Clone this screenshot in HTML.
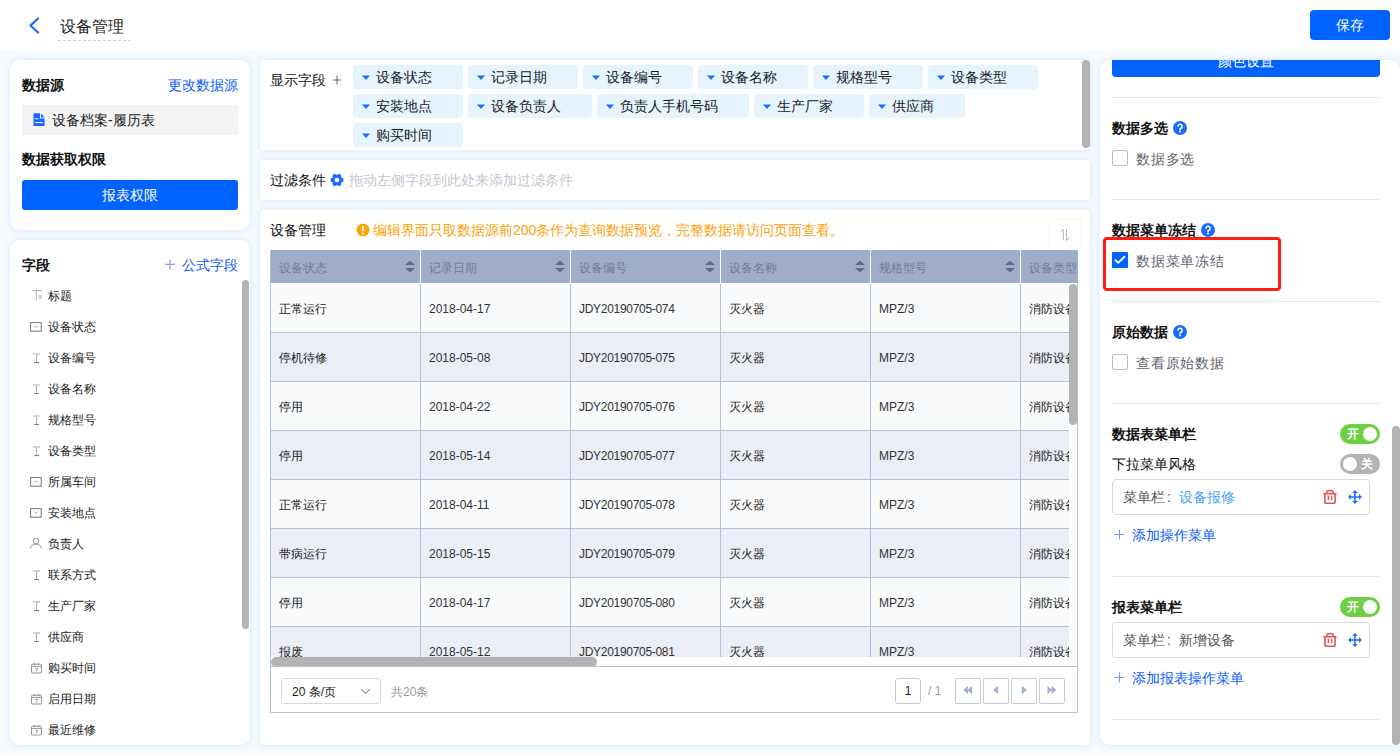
<!DOCTYPE html>
<html><head><meta charset="utf-8">
<style>
*{box-sizing:border-box;margin:0;padding:0}
html,body{width:1400px;height:755px;overflow:hidden}
body{font-family:"Liberation Sans",sans-serif;background:#f7fafe;position:relative;color:#333;font-size:14px}
.abs{position:absolute}
.hdr{left:0;top:0;width:1400px;height:50px;background:#fff}
.panel{position:absolute;background:#fff;box-shadow:0 0 6px rgba(202,231,255,.9)}
.t{position:absolute;white-space:nowrap;line-height:1}
.b{font-weight:bold;color:#111}
.blue{color:#0a66ff}
</style></head><body>
<!-- header -->
<div class="abs hdr">
  <svg class="abs" style="left:28px;top:17px" width="12" height="17" viewBox="0 0 12 17"><path d="M10 1.5 L2.5 8.5 L10 15.5" fill="none" stroke="#1a66ff" stroke-width="2.2" stroke-linecap="round" stroke-linejoin="round"/></svg>
  <div class="t" style="left:60px;top:19px;font-size:16px;color:#222">设备管理</div>
  <div class="abs" style="left:58px;top:40px;width:72px;height:1px;background:repeating-linear-gradient(90deg,#d0d0d0 0 3px,transparent 3px 5px)"></div>
  <div class="abs" style="left:1310px;top:10px;width:80px;height:30px;background:#0062ff;border-radius:4px;color:#fff;font-size:14px;line-height:30px;text-align:center">保存</div>
</div>

<!-- left panel 1 -->
<div class="panel" style="left:10px;top:60px;width:240px;height:170px;border-radius:10px">
  <div class="t b" style="left:12px;top:18px;font-size:14px">数据源</div>
  <div class="t blue" style="right:12px;top:18px;font-size:14px;color:#0b5cff">更改数据源</div>
  <div class="abs" style="left:12px;top:45px;width:216px;height:30px;background:#f4f4f5;border-radius:2px">
    <svg class="abs" style="left:11px;top:8px" width="12" height="13" viewBox="0 0 12 13"><path d="M0.5 0.3H7V5.4H11.6V12.4a0.6 0.6 0 0 1-.6.6H1.1a0.6 0.6 0 0 1-.6-.6Z" fill="#1a64ff"/><path d="M8 0.6L11.6 4.4H8Z" fill="#1a64ff"/><rect x="2" y="5.3" width="3.5" height="1" fill="#fff"/><rect x="2" y="9.1" width="8" height="1" fill="#fff"/></svg>
    <div class="t" style="left:30px;top:8px;font-size:14px;color:#1a1a1a">设备档案-履历表</div>
  </div>
  <div class="t b" style="left:12px;top:92px;font-size:14px">数据获取权限</div>
  <div class="abs" style="left:12px;top:120px;width:216px;height:30px;background:#0062ff;border-radius:3px;color:#fff;font-size:14px;line-height:30px;text-align:center">报表权限</div>
</div>
<!-- left panel 2 -->
<div class="panel" style="left:10px;top:240px;width:240px;height:505px;border-radius:10px;overflow:hidden">
  <div class="t b" style="left:12px;top:18px;font-size:14px">字段</div>
  <svg class="abs" style="left:155px;top:19px" width="10" height="11" viewBox="0 0 10 11"><path d="M5 0.5v10M0 5.3h10" stroke="#7289ff" stroke-width="1"/></svg><div class="t" style="right:12px;top:18px;font-size:14px;color:#0b5cff">公式字段</div>
  <div class="abs" style="left:232px;top:40px;width:7px;height:349px;background:#b3b3b3;border-radius:3.5px"></div>
<div class="abs" style="left:21px;top:50px;width:14px;height:14px"><svg width="14" height="14" viewBox="0 0 14 14"><path d="M1.3 0.6h9.6" stroke="#aaa" stroke-width="1" fill="none"/><path d="M5.3 0.6v10" stroke="#c9a99a" stroke-width="1" fill="none"/><path d="M7.6 6h3.4M7.6 8h3.4" stroke="#999" stroke-width="0.9" fill="none"/></svg></div><div class="t" style="left:38px;top:50px;font-size:12px;color:#1a1a1a">标题</div>
<div class="abs" style="left:20px;top:82px;width:14px;height:14px"><svg width="14" height="14" viewBox="0 0 14 14"><rect x="0.6" y="0.6" width="10.6" height="8.6" fill="none" stroke="#777" stroke-width="1"/><path d="M4.2 3.6l1.8 1.8 1.8-1.8" fill="none" stroke="#99a" stroke-width="0.9"/></svg></div><div class="t" style="left:38px;top:81px;font-size:12px;color:#1a1a1a">设备状态</div>
<div class="abs" style="left:20px;top:113px;width:14px;height:14px"><svg width="14" height="14" viewBox="0 0 14 14"><path d="M3 1h7.2" stroke="#c4c4c4" stroke-width="1.4" fill="none"/><path d="M6.6 1.7v7.8" stroke="#a59a9a" stroke-width="0.9" fill="none"/><path d="M4.2 9.6h4.8" stroke="#777" stroke-width="1" fill="none"/></svg></div><div class="t" style="left:38px;top:112px;font-size:12px;color:#1a1a1a">设备编号</div>
<div class="abs" style="left:20px;top:144px;width:14px;height:14px"><svg width="14" height="14" viewBox="0 0 14 14"><path d="M3 1h7.2" stroke="#c4c4c4" stroke-width="1.4" fill="none"/><path d="M6.6 1.7v7.8" stroke="#a59a9a" stroke-width="0.9" fill="none"/><path d="M4.2 9.6h4.8" stroke="#777" stroke-width="1" fill="none"/></svg></div><div class="t" style="left:38px;top:143px;font-size:12px;color:#1a1a1a">设备名称</div>
<div class="abs" style="left:20px;top:175px;width:14px;height:14px"><svg width="14" height="14" viewBox="0 0 14 14"><path d="M3 1h7.2" stroke="#c4c4c4" stroke-width="1.4" fill="none"/><path d="M6.6 1.7v7.8" stroke="#a59a9a" stroke-width="0.9" fill="none"/><path d="M4.2 9.6h4.8" stroke="#777" stroke-width="1" fill="none"/></svg></div><div class="t" style="left:38px;top:174px;font-size:12px;color:#1a1a1a">规格型号</div>
<div class="abs" style="left:20px;top:206px;width:14px;height:14px"><svg width="14" height="14" viewBox="0 0 14 14"><path d="M3 1h7.2" stroke="#c4c4c4" stroke-width="1.4" fill="none"/><path d="M6.6 1.7v7.8" stroke="#a59a9a" stroke-width="0.9" fill="none"/><path d="M4.2 9.6h4.8" stroke="#777" stroke-width="1" fill="none"/></svg></div><div class="t" style="left:38px;top:205px;font-size:12px;color:#1a1a1a">设备类型</div>
<div class="abs" style="left:20px;top:237px;width:14px;height:14px"><svg width="14" height="14" viewBox="0 0 14 14"><rect x="0.6" y="0.6" width="10.6" height="8.6" fill="none" stroke="#777" stroke-width="1"/><path d="M4.2 3.6l1.8 1.8 1.8-1.8" fill="none" stroke="#99a" stroke-width="0.9"/></svg></div><div class="t" style="left:38px;top:236px;font-size:12px;color:#1a1a1a">所属车间</div>
<div class="abs" style="left:20px;top:268px;width:14px;height:14px"><svg width="14" height="14" viewBox="0 0 14 14"><rect x="0.6" y="0.6" width="10.6" height="8.6" fill="none" stroke="#777" stroke-width="1"/><path d="M4.2 3.6l1.8 1.8 1.8-1.8" fill="none" stroke="#99a" stroke-width="0.9"/></svg></div><div class="t" style="left:38px;top:267px;font-size:12px;color:#1a1a1a">安装地点</div>
<div class="abs" style="left:20px;top:298px;width:14px;height:14px"><svg width="14" height="14" viewBox="0 0 14 14"><circle cx="5.9" cy="3" r="2.8" fill="none" stroke="#888" stroke-width="0.9"/><path d="M0.4 10.6c0.4-3 2.5-4.6 5.5-4.6s5.1 1.6 5.5 4.6" fill="none" stroke="#888" stroke-width="0.9"/></svg></div><div class="t" style="left:38px;top:298px;font-size:12px;color:#1a1a1a">负责人</div>
<div class="abs" style="left:20px;top:330px;width:14px;height:14px"><svg width="14" height="14" viewBox="0 0 14 14"><path d="M3 1h7.2" stroke="#c4c4c4" stroke-width="1.4" fill="none"/><path d="M6.6 1.7v7.8" stroke="#a59a9a" stroke-width="0.9" fill="none"/><path d="M4.2 9.6h4.8" stroke="#777" stroke-width="1" fill="none"/></svg></div><div class="t" style="left:38px;top:329px;font-size:12px;color:#1a1a1a">联系方式</div>
<div class="abs" style="left:20px;top:361px;width:14px;height:14px"><svg width="14" height="14" viewBox="0 0 14 14"><path d="M3 1h7.2" stroke="#c4c4c4" stroke-width="1.4" fill="none"/><path d="M6.6 1.7v7.8" stroke="#a59a9a" stroke-width="0.9" fill="none"/><path d="M4.2 9.6h4.8" stroke="#777" stroke-width="1" fill="none"/></svg></div><div class="t" style="left:38px;top:360px;font-size:12px;color:#1a1a1a">生产厂家</div>
<div class="abs" style="left:20px;top:392px;width:14px;height:14px"><svg width="14" height="14" viewBox="0 0 14 14"><path d="M3 1h7.2" stroke="#c4c4c4" stroke-width="1.4" fill="none"/><path d="M6.6 1.7v7.8" stroke="#a59a9a" stroke-width="0.9" fill="none"/><path d="M4.2 9.6h4.8" stroke="#777" stroke-width="1" fill="none"/></svg></div><div class="t" style="left:38px;top:391px;font-size:12px;color:#1a1a1a">供应商</div>
<div class="abs" style="left:21px;top:423px;width:14px;height:14px"><svg width="14" height="14" viewBox="0 0 14 14"><rect x="0.5" y="1.2" width="10" height="8.8" rx="1" fill="none" stroke="#888" stroke-width="0.9"/><path d="M0.5 3.4h10M3.3 0v2M7.7 0v2" fill="none" stroke="#888" stroke-width="0.9"/><path d="M4.3 5.4h2.4l-1.5 3" fill="none" stroke="#888" stroke-width="0.9"/></svg></div><div class="t" style="left:38px;top:422px;font-size:12px;color:#1a1a1a">购买时间</div>
<div class="abs" style="left:21px;top:454px;width:14px;height:14px"><svg width="14" height="14" viewBox="0 0 14 14"><rect x="0.5" y="1.2" width="10" height="8.8" rx="1" fill="none" stroke="#888" stroke-width="0.9"/><path d="M0.5 3.4h10M3.3 0v2M7.7 0v2" fill="none" stroke="#888" stroke-width="0.9"/><path d="M4.3 5.4h2.4l-1.5 3" fill="none" stroke="#888" stroke-width="0.9"/></svg></div><div class="t" style="left:38px;top:453px;font-size:12px;color:#1a1a1a">启用日期</div>
<div class="abs" style="left:21px;top:485px;width:14px;height:14px"><svg width="14" height="14" viewBox="0 0 14 14"><rect x="0.5" y="1.2" width="10" height="8.8" rx="1" fill="none" stroke="#888" stroke-width="0.9"/><path d="M0.5 3.4h10M3.3 0v2M7.7 0v2" fill="none" stroke="#888" stroke-width="0.9"/><path d="M4.3 5.4h2.4l-1.5 3" fill="none" stroke="#888" stroke-width="0.9"/></svg></div><div class="t" style="left:38px;top:484px;font-size:12px;color:#1a1a1a">最近维修</div>
</div>
<!-- middle panels -->
<div class="panel" style="left:260px;top:60px;width:830px;height:90px;border-radius:4px">
  <div class="t" style="left:10px;top:13px;font-size:14px;color:#111">显示字段</div>
  <svg class="abs" style="left:72px;top:15px" width="10" height="10" viewBox="0 0 10 10"><path d="M5 0.5v9M0.8 5h8.4" stroke="#666" stroke-width="1"/></svg>
  <div class="abs" style="left:93px;top:5px;width:110px;height:24px;background:#e6f4ff;border-radius:4px"><svg class="abs" style="left:9px;top:10px" width="8" height="6" viewBox="0 0 8 6"><path d="M0 0.5h8L4 5z" fill="#1a6cff"/></svg><div class="t" style="left:23px;top:5px;font-size:14px;color:#1a1a1a">设备状态</div></div>
<div class="abs" style="left:208px;top:5px;width:110px;height:24px;background:#e6f4ff;border-radius:4px"><svg class="abs" style="left:9px;top:10px" width="8" height="6" viewBox="0 0 8 6"><path d="M0 0.5h8L4 5z" fill="#1a6cff"/></svg><div class="t" style="left:23px;top:5px;font-size:14px;color:#1a1a1a">记录日期</div></div>
<div class="abs" style="left:323px;top:5px;width:110px;height:24px;background:#e6f4ff;border-radius:4px"><svg class="abs" style="left:9px;top:10px" width="8" height="6" viewBox="0 0 8 6"><path d="M0 0.5h8L4 5z" fill="#1a6cff"/></svg><div class="t" style="left:23px;top:5px;font-size:14px;color:#1a1a1a">设备编号</div></div>
<div class="abs" style="left:438px;top:5px;width:110px;height:24px;background:#e6f4ff;border-radius:4px"><svg class="abs" style="left:9px;top:10px" width="8" height="6" viewBox="0 0 8 6"><path d="M0 0.5h8L4 5z" fill="#1a6cff"/></svg><div class="t" style="left:23px;top:5px;font-size:14px;color:#1a1a1a">设备名称</div></div>
<div class="abs" style="left:553px;top:5px;width:110px;height:24px;background:#e6f4ff;border-radius:4px"><svg class="abs" style="left:9px;top:10px" width="8" height="6" viewBox="0 0 8 6"><path d="M0 0.5h8L4 5z" fill="#1a6cff"/></svg><div class="t" style="left:23px;top:5px;font-size:14px;color:#1a1a1a">规格型号</div></div>
<div class="abs" style="left:668px;top:5px;width:110px;height:24px;background:#e6f4ff;border-radius:4px"><svg class="abs" style="left:9px;top:10px" width="8" height="6" viewBox="0 0 8 6"><path d="M0 0.5h8L4 5z" fill="#1a6cff"/></svg><div class="t" style="left:23px;top:5px;font-size:14px;color:#1a1a1a">设备类型</div></div>
<div class="abs" style="left:93px;top:34px;width:110px;height:24px;background:#e6f4ff;border-radius:4px"><svg class="abs" style="left:9px;top:10px" width="8" height="6" viewBox="0 0 8 6"><path d="M0 0.5h8L4 5z" fill="#1a6cff"/></svg><div class="t" style="left:23px;top:5px;font-size:14px;color:#1a1a1a">安装地点</div></div>
<div class="abs" style="left:208px;top:34px;width:124px;height:24px;background:#e6f4ff;border-radius:4px"><svg class="abs" style="left:9px;top:10px" width="8" height="6" viewBox="0 0 8 6"><path d="M0 0.5h8L4 5z" fill="#1a6cff"/></svg><div class="t" style="left:23px;top:5px;font-size:14px;color:#1a1a1a">设备负责人</div></div>
<div class="abs" style="left:337px;top:34px;width:152px;height:24px;background:#e6f4ff;border-radius:4px"><svg class="abs" style="left:9px;top:10px" width="8" height="6" viewBox="0 0 8 6"><path d="M0 0.5h8L4 5z" fill="#1a6cff"/></svg><div class="t" style="left:23px;top:5px;font-size:14px;color:#1a1a1a">负责人手机号码</div></div>
<div class="abs" style="left:494px;top:34px;width:110px;height:24px;background:#e6f4ff;border-radius:4px"><svg class="abs" style="left:9px;top:10px" width="8" height="6" viewBox="0 0 8 6"><path d="M0 0.5h8L4 5z" fill="#1a6cff"/></svg><div class="t" style="left:23px;top:5px;font-size:14px;color:#1a1a1a">生产厂家</div></div>
<div class="abs" style="left:609px;top:34px;width:96px;height:24px;background:#e6f4ff;border-radius:4px"><svg class="abs" style="left:9px;top:10px" width="8" height="6" viewBox="0 0 8 6"><path d="M0 0.5h8L4 5z" fill="#1a6cff"/></svg><div class="t" style="left:23px;top:5px;font-size:14px;color:#1a1a1a">供应商</div></div>
<div class="abs" style="left:93px;top:63px;width:110px;height:24px;background:#e6f4ff;border-radius:4px"><svg class="abs" style="left:9px;top:10px" width="8" height="6" viewBox="0 0 8 6"><path d="M0 0.5h8L4 5z" fill="#1a6cff"/></svg><div class="t" style="left:23px;top:5px;font-size:14px;color:#1a1a1a">购买时间</div></div>

  <div class="abs" style="left:822px;top:0px;width:8px;height:88px;background:#b3b3b3;border-radius:4px"></div>
</div>
<div class="panel" style="left:260px;top:160px;width:830px;height:40px;border-radius:4px">
  <div class="t" style="left:10px;top:13px;font-size:14px;color:#111">过滤条件</div>
  <svg class="abs" style="left:70px;top:13px" width="14" height="14" viewBox="0 0 14 14"><g fill="#1a6cff"><circle cx="7" cy="7" r="4.9"/><circle cx="11.40" cy="7.00" r="2.2"/><circle cx="9.20" cy="10.81" r="2.2"/><circle cx="4.80" cy="10.81" r="2.2"/><circle cx="2.60" cy="7.00" r="2.2"/><circle cx="4.80" cy="3.19" r="2.2"/><circle cx="9.20" cy="3.19" r="2.2"/></g><circle cx="7" cy="7" r="2.3" fill="#fff"/></svg>
  <div class="t" style="left:89px;top:13px;font-size:14px;color:#c3c7cf">拖动左侧字段到此处来添加过滤条件</div>
</div>
<div class="panel" style="left:260px;top:210px;width:830px;height:535px;border-radius:4px">
  <div class="t" style="left:10px;top:13px;font-size:14px;color:#111">设备管理</div>

  <svg class="abs" style="left:96px;top:13px" width="14" height="14" viewBox="0 0 14 14"><circle cx="7" cy="7" r="6.5" fill="#ffa400"/><rect x="6" y="3" width="2" height="5.5" rx="1" fill="#fff"/><circle cx="7" cy="10.6" r="1.1" fill="#fff"/></svg>
  <div class="t" style="left:113px;top:13px;font-size:14px;color:#fca20a">编辑界面只取数据源前200条作为查询数据预览，完整数据请访问页面查看。</div>
  <div class="abs" style="left:790px;top:10px;width:30px;height:30px;background:#fff;box-shadow:0 0 4px rgba(0,0,0,.08)">
    <svg class="abs" style="left:8px;top:8px" width="14" height="14" viewBox="0 0 14 14"><path d="M5.3 12.5V1.2L2.2 4.3M8.5 1.2v11.3L11.6 9.4" fill="none" stroke="#b4b4bc" stroke-width="1"/></svg>
  </div>
  <div class="abs" style="left:10px;top:40px;width:808px;height:463px;border:1px solid #b6c1d7;border-top:none">
    <div class="abs" style="left:0px;top:0;width:807px;height:33px;background:#9eadc8;overflow:hidden;border-radius:0 3px 0 0"><div class="abs" style="left:0px;top:0;width:150px;height:33px;border-right:1px solid #fff"><div class="t" style="left:8px;top:12px;font-size:12px;color:#6f7b92">设备状态</div><svg class="abs" style="left:134px;top:10px" width="11" height="13" viewBox="0 0 11 13"><path d="M0 5L5 0.4L10 5z M0 7.9L5 12.2L10 7.9z" fill="#5f6b86"/></svg></div><div class="abs" style="left:150px;top:0;width:150px;height:33px;border-right:1px solid #fff"><div class="t" style="left:8px;top:12px;font-size:12px;color:#6f7b92">记录日期</div><svg class="abs" style="left:134px;top:10px" width="11" height="13" viewBox="0 0 11 13"><path d="M0 5L5 0.4L10 5z M0 7.9L5 12.2L10 7.9z" fill="#5f6b86"/></svg></div><div class="abs" style="left:300px;top:0;width:150px;height:33px;border-right:1px solid #fff"><div class="t" style="left:8px;top:12px;font-size:12px;color:#6f7b92">设备编号</div><svg class="abs" style="left:134px;top:10px" width="11" height="13" viewBox="0 0 11 13"><path d="M0 5L5 0.4L10 5z M0 7.9L5 12.2L10 7.9z" fill="#5f6b86"/></svg></div><div class="abs" style="left:450px;top:0;width:150px;height:33px;border-right:1px solid #fff"><div class="t" style="left:8px;top:12px;font-size:12px;color:#6f7b92">设备名称</div><svg class="abs" style="left:134px;top:10px" width="11" height="13" viewBox="0 0 11 13"><path d="M0 5L5 0.4L10 5z M0 7.9L5 12.2L10 7.9z" fill="#5f6b86"/></svg></div><div class="abs" style="left:600px;top:0;width:150px;height:33px;border-right:1px solid #fff"><div class="t" style="left:8px;top:12px;font-size:12px;color:#6f7b92">规格型号</div><svg class="abs" style="left:134px;top:10px" width="11" height="13" viewBox="0 0 11 13"><path d="M0 5L5 0.4L10 5z M0 7.9L5 12.2L10 7.9z" fill="#5f6b86"/></svg></div><div class="abs" style="left:750px;top:0;width:150px;height:33px;border-right:1px solid #fff"><div class="t" style="left:8px;top:12px;font-size:12px;color:#6f7b92">设备类型</div></div></div>
    <div class="abs" style="left:0px;top:34px;width:798px;height:373px;overflow:hidden;background:#fff"><div class="abs" style="left:0;top:0px;width:900px;height:49px;background:#f9fafc;border-bottom:1px solid #b6c1d7"><div class="abs" style="left:0px;top:0;width:150px;height:49px;border-right:1px solid #b6c1d7"><div class="t" style="left:8px;top:19px;font-size:12px;color:#1a1a1a">正常运行</div></div><div class="abs" style="left:150px;top:0;width:150px;height:49px;border-right:1px solid #b6c1d7"><div class="t" style="left:8px;top:19px;font-size:12px;color:#333">2018-04-17</div></div><div class="abs" style="left:300px;top:0;width:150px;height:49px;border-right:1px solid #b6c1d7"><div class="t" style="left:8px;top:19px;font-size:12px;color:#333;letter-spacing:-0.3px">JDY20190705-074</div></div><div class="abs" style="left:450px;top:0;width:150px;height:49px;border-right:1px solid #b6c1d7"><div class="t" style="left:8px;top:19px;font-size:12px;color:#1a1a1a">灭火器</div></div><div class="abs" style="left:600px;top:0;width:150px;height:49px;border-right:1px solid #b6c1d7"><div class="t" style="left:8px;top:19px;font-size:12px;color:#333">MPZ/3</div></div><div class="abs" style="left:750px;top:0;width:150px;height:49px;border-right:1px solid #b6c1d7"><div class="t" style="left:8px;top:19px;font-size:12px;color:#1a1a1a">消防设备</div></div></div>
<div class="abs" style="left:0;top:49px;width:900px;height:49px;background:#ebeef6;border-bottom:1px solid #b6c1d7"><div class="abs" style="left:0px;top:0;width:150px;height:49px;border-right:1px solid #b6c1d7"><div class="t" style="left:8px;top:19px;font-size:12px;color:#1a1a1a">停机待修</div></div><div class="abs" style="left:150px;top:0;width:150px;height:49px;border-right:1px solid #b6c1d7"><div class="t" style="left:8px;top:19px;font-size:12px;color:#333">2018-05-08</div></div><div class="abs" style="left:300px;top:0;width:150px;height:49px;border-right:1px solid #b6c1d7"><div class="t" style="left:8px;top:19px;font-size:12px;color:#333;letter-spacing:-0.3px">JDY20190705-075</div></div><div class="abs" style="left:450px;top:0;width:150px;height:49px;border-right:1px solid #b6c1d7"><div class="t" style="left:8px;top:19px;font-size:12px;color:#1a1a1a">灭火器</div></div><div class="abs" style="left:600px;top:0;width:150px;height:49px;border-right:1px solid #b6c1d7"><div class="t" style="left:8px;top:19px;font-size:12px;color:#333">MPZ/3</div></div><div class="abs" style="left:750px;top:0;width:150px;height:49px;border-right:1px solid #b6c1d7"><div class="t" style="left:8px;top:19px;font-size:12px;color:#1a1a1a">消防设备</div></div></div>
<div class="abs" style="left:0;top:98px;width:900px;height:49px;background:#f9fafc;border-bottom:1px solid #b6c1d7"><div class="abs" style="left:0px;top:0;width:150px;height:49px;border-right:1px solid #b6c1d7"><div class="t" style="left:8px;top:19px;font-size:12px;color:#1a1a1a">停用</div></div><div class="abs" style="left:150px;top:0;width:150px;height:49px;border-right:1px solid #b6c1d7"><div class="t" style="left:8px;top:19px;font-size:12px;color:#333">2018-04-22</div></div><div class="abs" style="left:300px;top:0;width:150px;height:49px;border-right:1px solid #b6c1d7"><div class="t" style="left:8px;top:19px;font-size:12px;color:#333;letter-spacing:-0.3px">JDY20190705-076</div></div><div class="abs" style="left:450px;top:0;width:150px;height:49px;border-right:1px solid #b6c1d7"><div class="t" style="left:8px;top:19px;font-size:12px;color:#1a1a1a">灭火器</div></div><div class="abs" style="left:600px;top:0;width:150px;height:49px;border-right:1px solid #b6c1d7"><div class="t" style="left:8px;top:19px;font-size:12px;color:#333">MPZ/3</div></div><div class="abs" style="left:750px;top:0;width:150px;height:49px;border-right:1px solid #b6c1d7"><div class="t" style="left:8px;top:19px;font-size:12px;color:#1a1a1a">消防设备</div></div></div>
<div class="abs" style="left:0;top:147px;width:900px;height:49px;background:#ebeef6;border-bottom:1px solid #b6c1d7"><div class="abs" style="left:0px;top:0;width:150px;height:49px;border-right:1px solid #b6c1d7"><div class="t" style="left:8px;top:19px;font-size:12px;color:#1a1a1a">停用</div></div><div class="abs" style="left:150px;top:0;width:150px;height:49px;border-right:1px solid #b6c1d7"><div class="t" style="left:8px;top:19px;font-size:12px;color:#333">2018-05-14</div></div><div class="abs" style="left:300px;top:0;width:150px;height:49px;border-right:1px solid #b6c1d7"><div class="t" style="left:8px;top:19px;font-size:12px;color:#333;letter-spacing:-0.3px">JDY20190705-077</div></div><div class="abs" style="left:450px;top:0;width:150px;height:49px;border-right:1px solid #b6c1d7"><div class="t" style="left:8px;top:19px;font-size:12px;color:#1a1a1a">灭火器</div></div><div class="abs" style="left:600px;top:0;width:150px;height:49px;border-right:1px solid #b6c1d7"><div class="t" style="left:8px;top:19px;font-size:12px;color:#333">MPZ/3</div></div><div class="abs" style="left:750px;top:0;width:150px;height:49px;border-right:1px solid #b6c1d7"><div class="t" style="left:8px;top:19px;font-size:12px;color:#1a1a1a">消防设备</div></div></div>
<div class="abs" style="left:0;top:196px;width:900px;height:49px;background:#f9fafc;border-bottom:1px solid #b6c1d7"><div class="abs" style="left:0px;top:0;width:150px;height:49px;border-right:1px solid #b6c1d7"><div class="t" style="left:8px;top:19px;font-size:12px;color:#1a1a1a">正常运行</div></div><div class="abs" style="left:150px;top:0;width:150px;height:49px;border-right:1px solid #b6c1d7"><div class="t" style="left:8px;top:19px;font-size:12px;color:#333">2018-04-11</div></div><div class="abs" style="left:300px;top:0;width:150px;height:49px;border-right:1px solid #b6c1d7"><div class="t" style="left:8px;top:19px;font-size:12px;color:#333;letter-spacing:-0.3px">JDY20190705-078</div></div><div class="abs" style="left:450px;top:0;width:150px;height:49px;border-right:1px solid #b6c1d7"><div class="t" style="left:8px;top:19px;font-size:12px;color:#1a1a1a">灭火器</div></div><div class="abs" style="left:600px;top:0;width:150px;height:49px;border-right:1px solid #b6c1d7"><div class="t" style="left:8px;top:19px;font-size:12px;color:#333">MPZ/3</div></div><div class="abs" style="left:750px;top:0;width:150px;height:49px;border-right:1px solid #b6c1d7"><div class="t" style="left:8px;top:19px;font-size:12px;color:#1a1a1a">消防设备</div></div></div>
<div class="abs" style="left:0;top:245px;width:900px;height:49px;background:#ebeef6;border-bottom:1px solid #b6c1d7"><div class="abs" style="left:0px;top:0;width:150px;height:49px;border-right:1px solid #b6c1d7"><div class="t" style="left:8px;top:19px;font-size:12px;color:#1a1a1a">带病运行</div></div><div class="abs" style="left:150px;top:0;width:150px;height:49px;border-right:1px solid #b6c1d7"><div class="t" style="left:8px;top:19px;font-size:12px;color:#333">2018-05-15</div></div><div class="abs" style="left:300px;top:0;width:150px;height:49px;border-right:1px solid #b6c1d7"><div class="t" style="left:8px;top:19px;font-size:12px;color:#333;letter-spacing:-0.3px">JDY20190705-079</div></div><div class="abs" style="left:450px;top:0;width:150px;height:49px;border-right:1px solid #b6c1d7"><div class="t" style="left:8px;top:19px;font-size:12px;color:#1a1a1a">灭火器</div></div><div class="abs" style="left:600px;top:0;width:150px;height:49px;border-right:1px solid #b6c1d7"><div class="t" style="left:8px;top:19px;font-size:12px;color:#333">MPZ/3</div></div><div class="abs" style="left:750px;top:0;width:150px;height:49px;border-right:1px solid #b6c1d7"><div class="t" style="left:8px;top:19px;font-size:12px;color:#1a1a1a">消防设备</div></div></div>
<div class="abs" style="left:0;top:294px;width:900px;height:49px;background:#f9fafc;border-bottom:1px solid #b6c1d7"><div class="abs" style="left:0px;top:0;width:150px;height:49px;border-right:1px solid #b6c1d7"><div class="t" style="left:8px;top:19px;font-size:12px;color:#1a1a1a">停用</div></div><div class="abs" style="left:150px;top:0;width:150px;height:49px;border-right:1px solid #b6c1d7"><div class="t" style="left:8px;top:19px;font-size:12px;color:#333">2018-04-17</div></div><div class="abs" style="left:300px;top:0;width:150px;height:49px;border-right:1px solid #b6c1d7"><div class="t" style="left:8px;top:19px;font-size:12px;color:#333;letter-spacing:-0.3px">JDY20190705-080</div></div><div class="abs" style="left:450px;top:0;width:150px;height:49px;border-right:1px solid #b6c1d7"><div class="t" style="left:8px;top:19px;font-size:12px;color:#1a1a1a">灭火器</div></div><div class="abs" style="left:600px;top:0;width:150px;height:49px;border-right:1px solid #b6c1d7"><div class="t" style="left:8px;top:19px;font-size:12px;color:#333">MPZ/3</div></div><div class="abs" style="left:750px;top:0;width:150px;height:49px;border-right:1px solid #b6c1d7"><div class="t" style="left:8px;top:19px;font-size:12px;color:#1a1a1a">消防设备</div></div></div>
<div class="abs" style="left:0;top:343px;width:900px;height:49px;background:#ebeef6;border-bottom:1px solid #b6c1d7"><div class="abs" style="left:0px;top:0;width:150px;height:49px;border-right:1px solid #b6c1d7"><div class="t" style="left:8px;top:19px;font-size:12px;color:#1a1a1a">报废</div></div><div class="abs" style="left:150px;top:0;width:150px;height:49px;border-right:1px solid #b6c1d7"><div class="t" style="left:8px;top:19px;font-size:12px;color:#333">2018-05-12</div></div><div class="abs" style="left:300px;top:0;width:150px;height:49px;border-right:1px solid #b6c1d7"><div class="t" style="left:8px;top:19px;font-size:12px;color:#333;letter-spacing:-0.3px">JDY20190705-081</div></div><div class="abs" style="left:450px;top:0;width:150px;height:49px;border-right:1px solid #b6c1d7"><div class="t" style="left:8px;top:19px;font-size:12px;color:#1a1a1a">灭火器</div></div><div class="abs" style="left:600px;top:0;width:150px;height:49px;border-right:1px solid #b6c1d7"><div class="t" style="left:8px;top:19px;font-size:12px;color:#333">MPZ/3</div></div><div class="abs" style="left:750px;top:0;width:150px;height:49px;border-right:1px solid #b6c1d7"><div class="t" style="left:8px;top:19px;font-size:12px;color:#1a1a1a">消防设备</div></div></div>
</div>
    <div class="abs" style="left:798px;top:34px;width:8px;height:141px;background:#b3b3b3;border-radius:4px"></div>
    <div class="abs" style="left:0px;top:407px;width:326px;height:10px;background:#b3b3b3;border-radius:5px"></div>
    <div class="abs" style="left:-1px;top:416px;width:808px;height:1px;background:#b6c1d7"></div>
    
    <div class="abs" style="left:10px;top:428px;width:100px;height:26px;border:1px solid #d9d9d9;border-radius:3px">
      <div class="t" style="left:10px;top:7px;font-size:12px;color:#1a1a1a">20 条/页</div>
      <svg class="abs" style="left:78px;top:9px" width="11" height="7" viewBox="0 0 11 7"><path d="M1 1l4.5 4.5L10 1" fill="none" stroke="#999" stroke-width="1.1"/></svg>
    </div>
    <div class="t" style="left:120px;top:436px;font-size:12px;color:#999">共20条</div>
    <div class="abs" style="left:624px;top:428px;width:26px;height:26px;border:1px solid #c3cbdc;border-radius:3px;text-align:center;line-height:24px;font-size:12px;color:#1a1a1a">1</div>
    <div class="t" style="left:657px;top:435px;font-size:12px;color:#999">/ 1</div>
    <div class="abs" style="left:684px;top:428px;width:26px;height:26px;border:1px solid #c3cbdc;border-radius:2px"><svg class="abs" style="left:5px;top:5px" width="14" height="14" viewBox="0 0 14 14"><path d="M2.3 6L6.9 1.8V10.2zM6.5 6L11.1 1.8V10.2z" fill="#a6b2cb"/></svg></div><div class="abs" style="left:712px;top:428px;width:26px;height:26px;border:1px solid #c3cbdc;border-radius:2px"><svg class="abs" style="left:5px;top:5px" width="14" height="14" viewBox="0 0 14 14"><path d="M4 6L9.2 1.8V10.2z" fill="#a6b2cb"/></svg></div><div class="abs" style="left:740px;top:428px;width:26px;height:26px;border:1px solid #c3cbdc;border-radius:2px"><svg class="abs" style="left:5px;top:5px" width="14" height="14" viewBox="0 0 14 14"><path d="M4.8 1.8V10.2L10 6z" fill="#a6b2cb"/></svg></div><div class="abs" style="left:768px;top:428px;width:26px;height:26px;border:1px solid #c3cbdc;border-radius:2px"><svg class="abs" style="left:5px;top:5px" width="14" height="14" viewBox="0 0 14 14"><path d="M2.5 1.8V10.2L7.1 6zM6.7 1.8V10.2L11.3 6z" fill="#a6b2cb"/></svg></div>

  </div>
</div>
<!-- right panel -->
<div class="panel" style="left:1100px;top:60px;width:300px;height:685px;border-radius:10px 10px 0 10px;overflow:hidden">
  <div class="abs" style="left:12px;top:-14px;width:268px;height:31px;background:#0062ff;border-radius:4px;overflow:hidden"><div class="t" style="left:0;width:268px;text-align:center;top:8px;font-size:14px;color:#fff">颜色设置</div></div>
  <div class="abs" style="left:12px;top:37px;width:268px;height:1px;background:#e6e6e6"></div>
  <div class="t b" style="left:12px;top:61px;font-size:14px">数据多选</div><svg class="abs" style="left:73px;top:61px" width="14" height="14" viewBox="0 0 14 14"><circle cx="7" cy="7" r="7" fill="#1a6cff"/><path d="M4.9 5.3a2.1 2.1 0 1 1 3 1.9c-.6.3-.9.7-.9 1.3v.4" fill="none" stroke="#fff" stroke-width="1.5" stroke-linecap="round"/><circle cx="7" cy="10.6" r=".95" fill="#fff"/></svg>
  <div class="abs" style="left:12px;top:90px;width:16px;height:16px;border:1px solid #b4bac8;border-radius:2px;background:#fff"></div><div class="t" style="left:36px;top:92px;font-size:14px;color:#60656f;letter-spacing:0.8px">数据多选</div>
  <div class="abs" style="left:12px;top:139px;width:268px;height:1px;background:#e6e6e6"></div>
  <div class="t b" style="left:12px;top:163px;font-size:14px">数据菜单冻结</div><svg class="abs" style="left:101px;top:163px" width="14" height="14" viewBox="0 0 14 14"><circle cx="7" cy="7" r="7" fill="#1a6cff"/><path d="M4.9 5.3a2.1 2.1 0 1 1 3 1.9c-.6.3-.9.7-.9 1.3v.4" fill="none" stroke="#fff" stroke-width="1.5" stroke-linecap="round"/><circle cx="7" cy="10.6" r=".95" fill="#fff"/></svg>
  <div class="abs" style="left:12px;top:192px;width:16px;height:16px;border-radius:1px;background:#0062ff"><svg class="abs" style="left:2px;top:3px" width="12" height="10" viewBox="0 0 12 10"><path d="M0.8 4.6l3.4 3.2L11 1.3" fill="none" stroke="#fff" stroke-width="1.9"/></svg></div><div class="t" style="left:36px;top:194px;font-size:14px;color:#60656f;letter-spacing:0.8px">数据菜单冻结</div>
  <div class="abs" style="left:3px;top:177px;width:178px;height:54px;border:3px solid #ff1c12;border-radius:4px"></div>
  <div class="abs" style="left:12px;top:241px;width:268px;height:1px;background:#e6e6e6"></div>
  <div class="t b" style="left:12px;top:265px;font-size:14px">原始数据</div><svg class="abs" style="left:73px;top:265px" width="14" height="14" viewBox="0 0 14 14"><circle cx="7" cy="7" r="7" fill="#1a6cff"/><path d="M4.9 5.3a2.1 2.1 0 1 1 3 1.9c-.6.3-.9.7-.9 1.3v.4" fill="none" stroke="#fff" stroke-width="1.5" stroke-linecap="round"/><circle cx="7" cy="10.6" r=".95" fill="#fff"/></svg>
  <div class="abs" style="left:12px;top:294px;width:16px;height:16px;border:1px solid #b4bac8;border-radius:2px;background:#fff"></div><div class="t" style="left:36px;top:296px;font-size:14px;color:#60656f;letter-spacing:0.8px">查看原始数据</div>
  <div class="abs" style="left:12px;top:343px;width:268px;height:1px;background:#e6e6e6"></div>
  <div class="t b" style="left:12px;top:367px;font-size:14px">数据表菜单栏</div><div class="abs" style="left:240px;top:364px;width:40px;height:20px;border-radius:10px;background:#6dcf42"><div class="t" style="left:7px;top:4px;font-size:12px;color:#fff;font-weight:bold">开</div><div class="abs" style="left:23px;top:3px;width:14px;height:14px;border-radius:7px;background:#fff"></div></div>
  <div class="t" style="left:12px;top:397px;font-size:14px;color:#111">下拉菜单风格</div><div class="abs" style="left:240px;top:394px;width:40px;height:20px;border-radius:10px;background:#b3b3b3"><div class="t" style="left:21px;top:4px;font-size:12px;color:#fff;font-weight:bold">关</div><div class="abs" style="left:3px;top:3px;width:14px;height:14px;border-radius:7px;background:#fff"></div></div>
  <div class="abs" style="left:12px;top:419px;width:258px;height:36px;border:1px solid #d9d9d9;border-radius:4px">
    <div class="t" style="left:10px;top:10px;font-size:14px;color:#555">菜单栏<span style="display:inline-block;width:14px;padding-left:2px">:</span><span style="color:#4a9ff5">设备报修</span></div>
    <svg class="abs" style="left:210px;top:10px" width="14" height="14" viewBox="0 0 14 14"><path d="M3.9 3.6V1.6a0.8 0.8 0 0 1 .8-.8h4.6a0.8 0.8 0 0 1 .8.8v2" fill="none" stroke="#e8505b" stroke-width="1.5"/><path d="M0.3 3.7h13.4" stroke="#e8505b" stroke-width="1.6"/><path d="M1.9 3.7v8.3a1.2 1.2 0 0 0 1.2 1.2h7.8a1.2 1.2 0 0 0 1.2-1.2V3.7" fill="none" stroke="#e8505b" stroke-width="1.6"/><path d="M5.4 5.8v4.2M8.6 5.8v4.2" stroke="#e8505b" stroke-width="1.4"/></svg><svg class="abs" style="left:235px;top:10px" width="14" height="14" viewBox="0 0 14 14"><path d="M7 1.5v11M1.5 7h11" stroke="#1a6cff" stroke-width="1.6"/><path d="M7 0L4.2 3h5.6zM7 14l-2.8-3h5.6zM0 7l3-2.8v5.6zM14 7l-3-2.8v5.6z" fill="#1a6cff"/></svg>
  </div>
  <div class="abs" style="left:13px;top:467px;width:120px;height:16px"><svg class="abs" style="left:1px;top:2px" width="11" height="11" viewBox="0 0 11 11"><path d="M5.5 0.5v10M0.5 5.5h10" stroke="#7b93ff" stroke-width="1"/></svg><div class="t" style="left:19px;top:1px;font-size:14px;color:#0b5cff">添加操作菜单</div></div>
  <div class="abs" style="left:12px;top:516px;width:268px;height:1px;background:#e6e6e6"></div>
  <div class="t b" style="left:12px;top:540px;font-size:14px">报表菜单栏</div><div class="abs" style="left:240px;top:537px;width:40px;height:20px;border-radius:10px;background:#6dcf42"><div class="t" style="left:7px;top:4px;font-size:12px;color:#fff;font-weight:bold">开</div><div class="abs" style="left:23px;top:3px;width:14px;height:14px;border-radius:7px;background:#fff"></div></div>
  <div class="abs" style="left:12px;top:562px;width:258px;height:36px;border:1px solid #d9d9d9;border-radius:4px">
    <div class="t" style="left:10px;top:10px;font-size:14px;color:#555">菜单栏<span style="display:inline-block;width:14px;padding-left:2px">:</span>新增设备</div>
    <svg class="abs" style="left:210px;top:10px" width="14" height="14" viewBox="0 0 14 14"><path d="M3.9 3.6V1.6a0.8 0.8 0 0 1 .8-.8h4.6a0.8 0.8 0 0 1 .8.8v2" fill="none" stroke="#e8505b" stroke-width="1.5"/><path d="M0.3 3.7h13.4" stroke="#e8505b" stroke-width="1.6"/><path d="M1.9 3.7v8.3a1.2 1.2 0 0 0 1.2 1.2h7.8a1.2 1.2 0 0 0 1.2-1.2V3.7" fill="none" stroke="#e8505b" stroke-width="1.6"/><path d="M5.4 5.8v4.2M8.6 5.8v4.2" stroke="#e8505b" stroke-width="1.4"/></svg><svg class="abs" style="left:235px;top:10px" width="14" height="14" viewBox="0 0 14 14"><path d="M7 1.5v11M1.5 7h11" stroke="#1a6cff" stroke-width="1.6"/><path d="M7 0L4.2 3h5.6zM7 14l-2.8-3h5.6zM0 7l3-2.8v5.6zM14 7l-3-2.8v5.6z" fill="#1a6cff"/></svg>
  </div>
  <div class="abs" style="left:13px;top:610px;width:140px;height:16px"><svg class="abs" style="left:1px;top:2px" width="11" height="11" viewBox="0 0 11 11"><path d="M5.5 0.5v10M0.5 5.5h10" stroke="#7b93ff" stroke-width="1"/></svg><div class="t" style="left:19px;top:1px;font-size:14px;color:#0b5cff">添加报表操作菜单</div></div>
  <div class="abs" style="left:12px;top:659px;width:268px;height:1px;background:#e6e6e6"></div>
  <div class="abs" style="left:292px;top:366px;width:8px;height:319px;background:#b3b3b3;border-radius:4px"></div>
</div>
</body></html>
